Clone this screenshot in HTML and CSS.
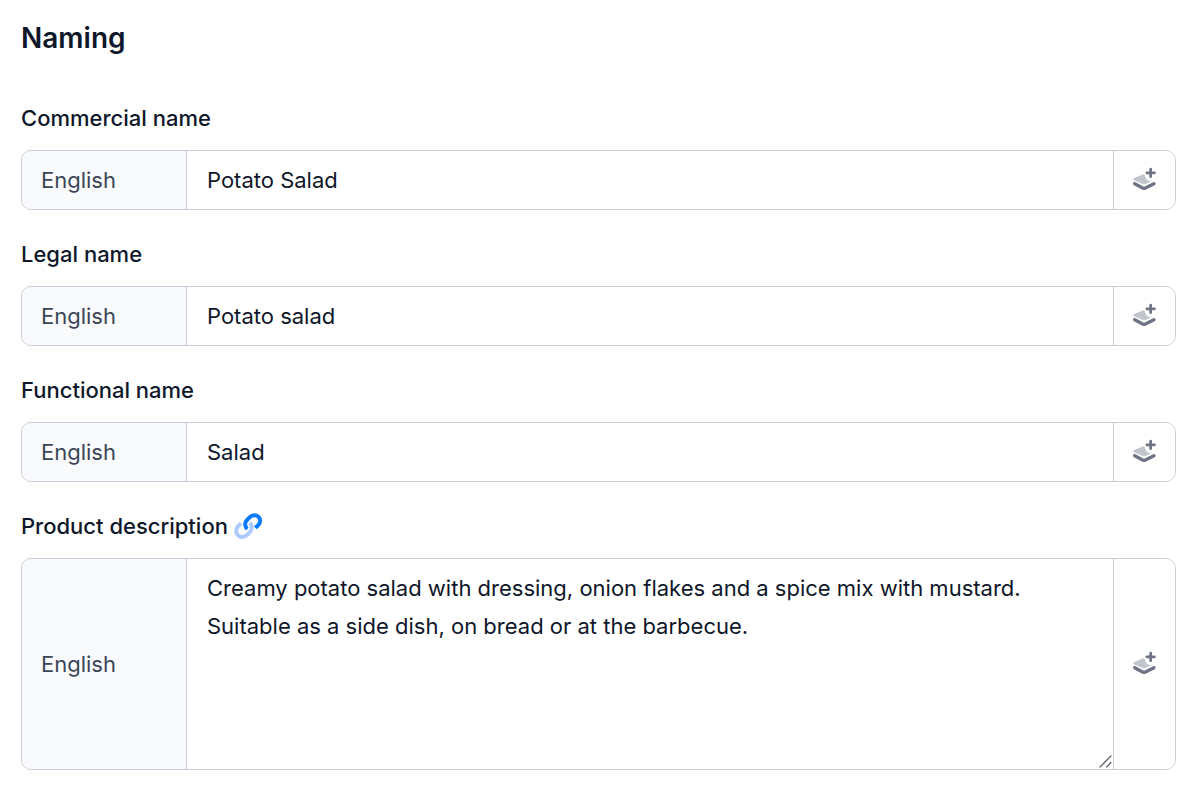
FILE: index.html
```html
<!DOCTYPE html>
<html lang="en">
<head>
<meta charset="utf-8">
<title>Naming</title>
<link rel="stylesheet" href="styles.css">
</head>
<body>
<svg class="symbols" aria-hidden="true">
  <symbol id="layers-plus" viewBox="0 0 120 120">
    <path d="M28 60Q26 57 31 54L54 44Q58 42 62 44Q64 57 74 62Q81 65 90 60L64 72Q60 74 56 72Z" fill="#c1c5cd"/>
    <path d="M32 71L56 84Q60 86 64 84L90 71" fill="none" stroke="#6b7385" stroke-width="10" stroke-linecap="round" stroke-linejoin="round"/>
    <path d="M80 27V50M68.500 38.500H91.500" fill="none" stroke="#6b7385" stroke-width="8" stroke-linecap="round"/>
  </symbol>
</svg>
<main class="page">
  <h1 class="title">Naming</h1>
  <form class="fields">
    <div class="field">
      <label class="label" for="commercial">Commercial name</label>
      <div class="group">
        <span class="lang">English</span>
        <input class="control" id="commercial" type="text" value="Potato Salad">
        <button class="add" type="button" aria-label="Add translation"><svg class="add-icon"><use href="#layers-plus"/></svg></button>
      </div>
    </div>
    <div class="field">
      <label class="label" for="legal">Legal name</label>
      <div class="group">
        <span class="lang">English</span>
        <input class="control" id="legal" type="text" value="Potato salad">
        <button class="add" type="button" aria-label="Add translation"><svg class="add-icon"><use href="#layers-plus"/></svg></button>
      </div>
    </div>
    <div class="field">
      <label class="label" for="functional">Functional name</label>
      <div class="group">
        <span class="lang">English</span>
        <input class="control" id="functional" type="text" value="Salad">
        <button class="add" type="button" aria-label="Add translation"><svg class="add-icon"><use href="#layers-plus"/></svg></button>
      </div>
    </div>
    <div class="field">
      <label class="label" for="description">Product description
        <svg class="link-icon" viewBox="0 0 120 120" aria-hidden="true">
          <g fill="none" stroke-width="12" stroke-linecap="butt">
            <path d="M36 52L27 61C19 70 20 82 27 88C34 95 46 94 53 88L63 78C71 70 70 57 62 50" stroke="#adcbff"/>
            <path d="M55 69C47 62 46 50 54 42L64 32C71 26 82 26 88 32C95 39 95 49 88 57L79 65" stroke="#0a7aff"/>
          </g>
        </svg>
      </label>
      <div class="group">
        <span class="lang">English</span>
        <div class="area-wrap">
          <textarea class="control area" id="description" rows="5">Creamy potato salad with dressing, onion flakes and a spice mix with mustard.
Suitable as a side dish, on bread or at the barbecue.</textarea>
          <svg class="grip" viewBox="0 0 12 12" aria-hidden="true"><path d="M1 11L11 1M7 11L11 7" stroke="#6e6f78" stroke-width="1.400" stroke-linecap="round"/></svg>
        </div>
        <button class="add" type="button" aria-label="Add translation"><svg class="add-icon"><use href="#layers-plus"/></svg></button>
      </div>
    </div>
  </form>
</main>
</body>
</html>
```
FILE: styles.css
```css
* {
  box-sizing: border-box;
}

body {
  margin: 0;
  background: #fff;
  color: #0f172a;
  font: 400 22px/38px Inter, "Liberation Sans", sans-serif;
}

.symbols {
  position: absolute;
  width: 0;
  height: 0;
}

.page {
  padding: 19px 24px 18px 21px;
}

.title {
  margin: 0 0 42px;
  font-size: 28px;
  font-weight: 600;
  line-height: 38px;
}

.fields {
  display: flex;
  flex-direction: column;
  gap: 25px;
}

.field {
  display: flex;
  flex-direction: column;
  gap: 13px;
}

.label {
  display: flex;
  align-items: center;
  font-weight: 500;
}

.link-icon {
  width: 40px;
  height: 40px;
  margin: -1px 1px;
}

.group {
  display: flex;
  border: 1px solid #cbced9;
  border-radius: 10px;
  overflow: hidden;
}

.lang {
  display: flex;
  align-items: center;
  flex: 0 0 165px;
  padding: 0 19px;
  border-right: 1px solid #cbced9;
  background: #f9fafc;
  color: #3c4557;
}

.control {
  display: block;
  flex: 1;
  min-width: 0;
  width: 100%;
  margin: 0;
  padding: 10px 20px;
  border: 0;
  outline: 0;
  background: #fff;
  color: inherit;
  font: inherit;
}

.area-wrap {
  position: relative;
  flex: 1;
  min-width: 0;
}

.area {
  resize: vertical;
}

.area::-webkit-resizer {
  display: none;
}

.grip {
  position: absolute;
  right: 1px;
  bottom: 1px;
  width: 13px;
  height: 13px;
  pointer-events: none;
}

.add {
  display: flex;
  align-items: center;
  justify-content: center;
  flex: 0 0 62px;
  padding: 0 2px 0 0;
  border: 0;
  border-left: 1px solid #cbced9;
  background: #fff;
}

.add-icon {
  width: 40px;
  height: 40px;
}
```
